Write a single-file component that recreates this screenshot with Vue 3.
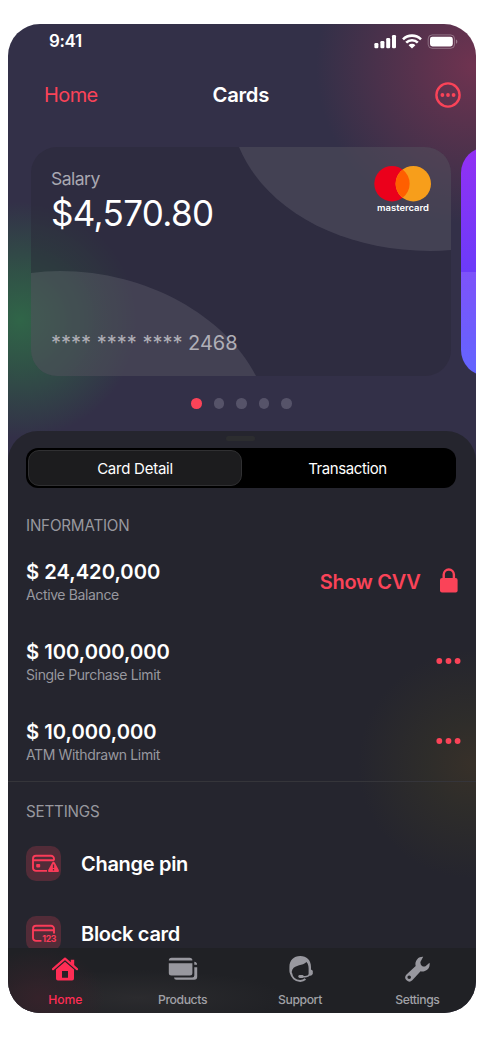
<script setup>
const limits = [
  { amount: '$ 24,420,000', label: 'Active Balance', cvv: true },
  { amount: '$ 100,000,000', label: 'Single Purchase Limit' },
  { amount: '$ 10,000,000', label: 'ATM Withdrawn Limit' },
]
</script>

<template>
  <main class="phone">
    <header class="status">
      <span class="time">9:41</span>
      <svg class="signals" width="86" height="18" viewBox="0 0 86 18">
        <g fill="#fff">
          <rect x=".4" y="10" width="4" height="5.2" rx="1.2" />
          <rect x="6.4" y="8" width="4" height="7.2" rx="1.2" />
          <rect x="12.2" y="5" width="4" height="10.2" rx="1.2" />
          <rect x="18" y="2" width="4" height="13.2" rx="1.2" />
        </g>
        <g fill="none" stroke="#fff" stroke-width="2.6">
          <path d="M29 6.3a12.8 12.8 0 0 1 18 0" />
          <path d="M32.2 9.7a8.2 8.2 0 0 1 11.6 0" />
        </g>
        <path d="M34.6 12.2a4.8 4.8 0 0 1 6.8 0L38 15.6z" fill="#fff" />
        <rect x="54.2" y="1.9" width="26.4" height="13.4" rx="4" fill="none" stroke="#fff" stroke-opacity=".3" />
        <rect x="56" y="3.7" width="22.8" height="9.8" rx="2.4" fill="#fff" />
        <path d="M82 6.6v4.2a2.3 2.3 0 0 0 0-4.2z" fill="#fff" fill-opacity=".35" />
      </svg>
    </header>

    <nav class="titlebar">
      <span class="back">Home</span>
      <h1>Cards</h1>
      <svg class="more" width="28" height="28" viewBox="0 0 28 28">
        <circle cx="14" cy="14" r="11.6" fill="none" stroke="#fa4358" stroke-width="2.4" />
        <g fill="#fa4358"><circle cx="8.4" cy="14" r="1.9" /><circle cx="14" cy="14" r="1.9" /><circle cx="19.6" cy="14" r="1.9" /></g>
      </svg>
    </nav>

    <section class="cards">
      <article class="card">
        <svg class="waves" width="420" height="229" viewBox="0 0 420 229" fill="#fff" fill-opacity=".1">
          <path d="M0 126Q14 124 29 124C116 124 194 169 225 229H0z" />
          <path d="M208 0C235 65 313 104 399 104Q410 104 420 103V0z" />
        </svg>
        <div class="card-text">
          <span class="kind">Salary</span>
          <strong>$4,570.80</strong>
          <span class="number"><span class="stars">**** **** ****</span><span class="last">2468</span></span>
        </div>
        <svg class="brand" width="60" height="50" viewBox="0 0 60 50">
          <circle cx="19" cy="18.7" r="17.7" fill="#eb001b" />
          <circle cx="40.3" cy="18.7" r="17.7" fill="#f79e1b" />
          <path d="M29.65 4.6a17.7 17.7 0 0 1 0 28.2a17.7 17.7 0 0 1 0-28.2z" fill="#ff5f00" />
          <text x="30" y="46.4" text-anchor="middle" textLength="52" lengthAdjust="spacingAndGlyphs" fill="#fff">mastercard</text>
        </svg>
      </article>
      <div class="next"></div>
    </section>
    <div class="pager"><i class="on"></i><i></i><i></i><i></i><i></i></div>

    <section class="sheet">
      <div class="grab"></div>
      <div class="segment"><span class="active">Card Detail</span><span>Transaction</span></div>
      <h2>INFORMATION</h2>
      <ul class="limits">
        <li v-for="l in limits" :key="l.label">
          <div><b>{{ l.amount }}</b><small>{{ l.label }}</small></div>
          <div v-if="l.cvv" class="cvv">
            <span>Show CVV</span>
            <svg width="18" height="25" viewBox="0 0 18 25">
              <rect x="0" y="10" width="17.6" height="14.6" rx="2" fill="#fa4358" />
              <path d="M3.7 11V6.6a5.1 5.1 0 0 1 10.2 0V11" fill="none" stroke="#fa4358" stroke-width="2.4" />
            </svg>
          </div>
          <svg v-else class="dots" width="25" height="6" viewBox="0 0 25 6" fill="#fa4358">
            <circle cx="3.3" cy="3" r="2.9" /><circle cx="12.5" cy="3" r="2.9" /><circle cx="21.6" cy="3" r="2.9" />
          </svg>
        </li>
      </ul>
      <div class="settings">
        <h2>SETTINGS</h2>
        <div class="row">
          <span class="tile">
            <svg width="35" height="35" viewBox="0 0 35 35" fill="none" stroke="#fa3b58" stroke-width="1.9">
              <path d="M28 14.5V12.7a3 3 0 0 0-3-3H10a3 3 0 0 0-3 3v9.2a3 3 0 0 0 3 3h11M7 14.3h21" />
              <rect x="10.2" y="18" width="4" height="3.4" rx=".8" fill="#fa3b58" stroke="none" />
              <path d="M27.5 15.8q.9 0 1.4 1l3.9 7.3q.9 1.8-1 1.9h-8.6q-1.9-.1-1-1.9l3.900-7.300q.5-1 1.400-1z" fill="#fa3b58" stroke="none" />
              <path d="M27.500 18.500v3.400M27.500 23.100v1.400" stroke="#522c38" stroke-width="1.300" />
            </svg>
          </span>
          <span>Change pin</span>
        </div>
        <div class="row">
          <span class="tile">
            <svg width="35" height="35" viewBox="0 0 35 35" fill="none" stroke="#fa3b58" stroke-width="1.9">
              <path d="M28 17.500V12.700a3 3 0 0 0-3-3H10a3 3 0 0 0-3 3v9.200a3 3 0 0 0 3 3h5.500M7 14.300h21" />
              <text x="16.200" y="26.200" textLength="14" lengthAdjust="spacingAndGlyphs" fill="#fa3b58" stroke="none">123</text>
            </svg>
          </span>
          <span>Block card</span>
        </div>
      </div>
    </section>

    <footer class="tabs">
      <div class="tab current">
        <svg width="30" height="28" viewBox="0 0 30 28">
          <path d="M3 14.200L15 3.700l12 10.500" fill="none" stroke="#ff2d55" stroke-width="2.200" stroke-linecap="round" stroke-linejoin="round" />
          <path d="M20.800 4.800h3.400v6.400l-3.400-3z" fill="#ff2d55" />
          <path fill-rule="evenodd" d="M15 6.800l9 7.800v9q0 1.900-1.900 1.900H7.900q-1.900 0-1.900-1.900v-9zM12 16v6.800h6V16z" fill="#ff2d55" />
        </svg>
        <span>Home</span>
      </div>
      <div class="tab">
        <svg width="30" height="28" viewBox="0 0 30 28" fill="#98989f">
          <path d="M.8 5.600q0-2.800 2.800-2.800h18q2.800 0 2.800 2.800z" />
          <path d="M.8 8.300h23.600v9.600q0 2.500-2.500 2.500H3.300q-2.500 0-2.500-2.500z" />
          <path d="M26.300 6.800q2.800.3 2.800 2.900h-2.800zM26.300 12.300h2.900v9.400q0 3-3 3H8.400q-2.200 0-2.400-2.300h18.300q2 0 2-2z" />
        </svg>
        <span>Products</span>
      </div>
      <div class="tab">
        <svg width="28" height="28" viewBox="0 0 28 28">
          <path d="M5 19.500C3.800 18.800 3.400 17.500 3.400 15.500V12C3.400 5.300 7.800 1 14.200 1C20.800 1 25 5.300 25 12v2.500l1.800 1.200v3.400L25 20.800L22.600 20.300V13.600C22.600 10.800 21.900 8.500 20.500 7C16.500 11 9.500 9.300 6.400 14.500z" fill="#98989f" />
          <path d="M4.900 17.500C5.700 22.400 9.200 26 14.200 26Q17.300 26 19.400 24.100" fill="none" stroke="#98989f" stroke-width="2" />
          <path d="M23.700 19.300Q22.300 21.700 19 21.700H14.500" fill="none" stroke="#98989f" stroke-width="1.400" />
          <rect x="12.300" y="20.100" width="5.400" height="2.900" rx="1.450" fill="#98989f" />
        </svg>
        <span>Support</span>
      </div>
      <div class="tab">
        <svg width="28" height="28" viewBox="0 0 28 28">
          <path fill-rule="evenodd" d="M20.200 1.800a7.200 7.200 0 0 0-7.500 9.200L3.500 19.600a4 4 0 0 0 5.800 5.600L17.600 16.300A7.200 7.200 0 0 0 26.500 7.800L22.500 11.300Q20.800 12.100 19 10.900 17.200 9.400 17.400 7zM6.200 20.500a1.800 1.800 0 1 1 0 3.600a1.800 1.800 0 0 1 0-3.600z" fill="#98989f" />
        </svg>
        <span>Settings</span>
      </div>
    </footer>
  </main>
</template>

<style>
html, body { background: #fff; }
</style>

<style scoped>
.phone {
  box-sizing: border-box;
  width: 468px;
  height: 989px;
  margin: 24px 0 0 8px;
  border-radius: 32px;
  overflow: hidden;
  display: flex;
  flex-direction: column;
  font-family: Inter, "Liberation Sans", sans-serif;
  color: #fff;
  background:
    radial-gradient(circle at 466px 42px, #6f3350 0, rgba(112, 51, 80, .55) 68px, rgba(112, 51, 80, 0) 158px),
    radial-gradient(circle at 12px 296px, #306548 0, rgba(47, 97, 70, .68) 48px, rgba(47, 97, 70, 0) 118px),
    #333048;
}
.status { display: flex; justify-content: space-between; height: 34px; padding: 0 16px 0 41px; align-items: center; box-sizing: border-box; }
.time { font-size: 17px; font-weight: 600; letter-spacing: -.4px; }
.signals { margin-top: 1px; }
.titlebar { display: grid; grid-template-columns: 1fr auto 1fr; align-items: center; height: 30px; margin-top: 22px; padding: 0 14px 0 36px; font-size: 20px; line-height: 30px; }
.back { color: #fa4358; letter-spacing: -.6px; }
h1 { font-size: 20.3px; font-weight: 600; margin: 0 24.5px 0 0; letter-spacing: -.3px; }
.more { justify-self: end; margin-top: -1px; }
.cards { display: flex; gap: 10px; margin: 37px 0 0 23px; height: 229px; }
.card { position: relative; flex: 0 0 420px; box-sizing: border-box; border-radius: 26px; overflow: hidden; display: flex; justify-content: space-between; padding: 18px 18px 0 20px; background: rgba(41, 40, 55, .46); }
.waves { position: absolute; inset: 0; }
.card-text { position: relative; display: flex; flex-direction: column; }
.kind { font-size: 17.6px; line-height: 28px; color: #a9a8b1; letter-spacing: -.55px; }
.card strong { font-size: 35px; font-weight: 400; line-height: 40px; letter-spacing: -.65px; }
.number { display: flex; margin-top: 95.5px; font-size: 20px; line-height: 28px; color: #b0afb7; }
.stars { width: 137px; white-space: pre; }
.brand { position: relative; }
.brand text { font: 600 8.8px Inter, sans-serif; }
.next { flex: 0 0 60px; border-radius: 26px; background: linear-gradient(rgba(255,255,255,0) 125px, rgba(255,255,255,.12) 125px), linear-gradient(#9330f3, #6b3bfa 55%, #4d50ff); }
.pager { display: flex; gap: 12px; margin: 22px 0 0 183px; height: 11px; }
.pager i { width: 10.5px; height: 10.5px; border-radius: 50%; background: #565369; }
.pager .on { background: #fa4358; }
.sheet {
  flex: 0 0 517px; margin-top: 22px; overflow: hidden; border-radius: 30px 30px 0 0;
  background: radial-gradient(circle at 464px 333px, #373029 0, rgba(49, 47, 41, .75) 45px, rgba(43, 45, 43, 0) 114px), #25252e;
}
.grab { width: 29px; height: 5px; margin: 5px 0 0 218px; border-radius: 3px; background: #2c2d2f; }
.segment { display: flex; box-sizing: border-box; width: 430px; height: 40px; margin: 7px 0 0 18px; padding: 2px; border-radius: 12px; background: #000; }
.segment span { flex: 1; box-sizing: border-box; font-size: 15px; line-height: 37px; text-align: center; letter-spacing: -.4px; padding-right: 1px; }
.segment .active { flex: 0 0 214px; padding: 0; line-height: 35px; border: 1px solid #303032; border-radius: 11px; background: #1c1c1e; letter-spacing: -.25px; }
h2 { margin: 0; font-size: 15.2px; line-height: 20px; font-weight: 400; color: #98989f; letter-spacing: -.2px; }
.sheet > h2 { margin: 28px 0 0 18px; }
.limits { list-style: none; margin: 0; padding: 21px 0 0; }
.limits li { display: flex; justify-content: space-between; height: 80px; padding: 0 15px 0 18px; }
.limits b { display: block; font-size: 20.2px; line-height: 30px; font-weight: 600; }
.limits small { display: block; margin-top: -1.5px; font-size: 14px; line-height: 18px; color: #98989f; letter-spacing: -.37px; }
.dots { margin-top: 21px; }
.cvv { display: flex; gap: 19px; height: 25px; padding: 11px 3.5px 0 0; color: #fa4358; font-size: 20px; font-weight: 600; line-height: 29px; letter-spacing: -.3px; }
.settings { margin-top: -16px; border-top: 1.5px solid #35353a; padding: 20px 18px 0; }
.settings h2 { margin-bottom: 24px; }
.row { display: flex; align-items: center; gap: 20px; height: 35px; margin-bottom: 35px; font-size: 20px; font-weight: 600; letter-spacing: -.3px; }
.tile { width: 35px; height: 35px; border-radius: 10px; background: #522c38; }
.tile text { font: 700 9px Inter, sans-serif; }
.tabs {
  flex: 0 0 65px; display: flex;
  background: radial-gradient(ellipse 65px 50px at 32px 50px, #35222a 0, rgba(58, 33, 40, 0) 100%), radial-gradient(ellipse 150px 28px at 130px 50px, #2b2b2e 0, rgba(43, 43, 46, 0) 100%), #202125;
}
.tab { flex: 1; display: flex; flex-direction: column; align-items: center; color: #a1a1a7; font-size: 12.2px; font-weight: 500; line-height: 16px; letter-spacing: -.4px; }
.tab svg { height: 28px; margin: 7px 0 9px; flex: none; }
.current { color: #ff2d55; margin-left: -1.5px; letter-spacing: -.1px; }
</style>
